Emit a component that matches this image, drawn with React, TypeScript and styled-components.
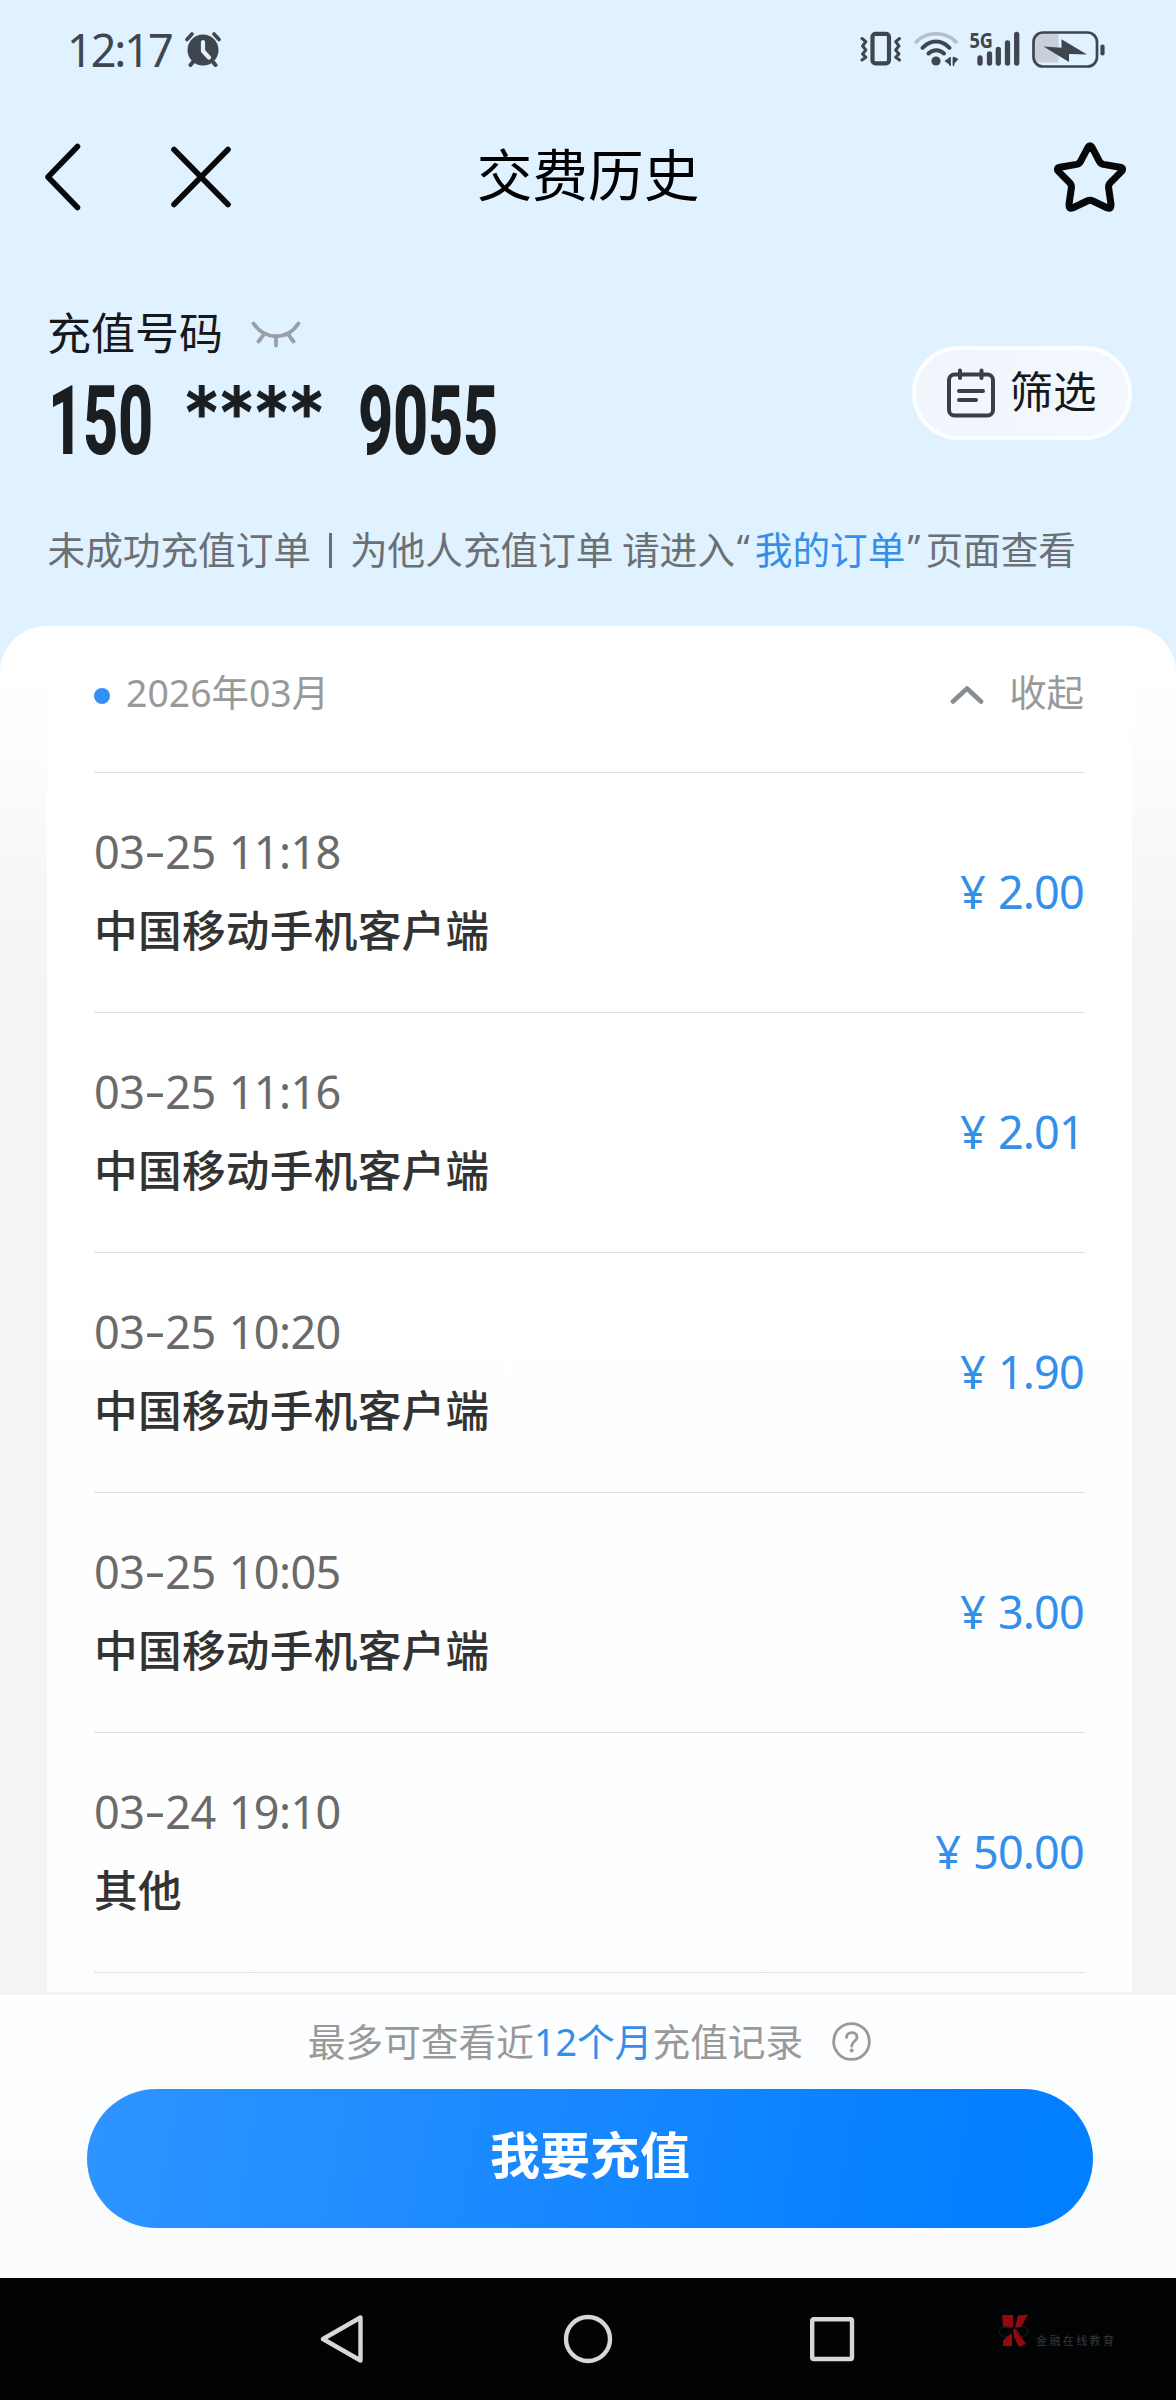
import React from "react";
import styled, { createGlobalStyle } from "styled-components";

const CJK = `"Noto Sans CJK SC", sans-serif`;
const MIXED = `"Noto Sans", "Noto Sans CJK SC", sans-serif`;

const Global = createGlobalStyle`
  html, body { margin: 0; padding: 0; background: #000; }
  *, *::before, *::after { box-sizing: border-box; }
  button { border: 0; padding: 0; margin: 0; background: none; font: inherit; color: inherit; }
  svg { display: block; flex: none; }
`;

const Screen = styled.div`
  width: 1176px;
  height: 2400px;
  display: flex;
  flex-direction: column;
  overflow: hidden;
  background: #e0f1ff;
  font-family: ${CJK};
  white-space: nowrap;
`;

const StatusBar = styled.div`
  height: 98px;
  padding: 0 70px 0 67px;
  display: flex;
  align-items: center;
  color: #40464d;
`;

const Clock = styled.span`
  font: 400 45px/60px ${MIXED};
  letter-spacing: -2.1px;
  width: 118px;
  padding-top: 2px;
`;

const StatusIcons = styled.div`
  margin-left: auto;
  display: flex;
  align-items: center;
`;

const TitleBar = styled.header`
  height: 156px;
  display: grid;
  grid-template-columns: 1fr auto 1fr;
  align-items: center;
  padding: 2px 49px 0 43px;
`;

const NavGroup = styled.div<{ $end?: boolean }>`
  display: flex;
  align-items: center;
  gap: 87px;
  justify-content: ${(p) => (p.$end ? "flex-end" : "flex-start")};
`;

const Title = styled.h1`
  margin: 0;
  font: 400 55.7px/70px ${CJK};
  color: #000;
  padding: 0 0 10px 6px;
`;

const Account = styled.section`
  height: 246px;
  padding: 47px 44px 0 47px;
  display: flex;
  justify-content: space-between;
`;

const LabelRow = styled.div`
  display: flex;
  align-items: center;
  gap: 27px;
  font: 400 44px/60px ${CJK};
  color: #16191c;
  svg { margin-top: 6px; }
`;

const PhoneNumber = styled.div`
  display: flex;
  align-items: flex-start;
  height: 100px;
  gap: 33px;
  padding: 10px 0 0 1px;
  color: #1b1e20;
`;

const Digits = styled.span<{ $count: number }>`
  width: ${(p) => p.$count * 35}px;
  font: 800 97px/100px Roboto, sans-serif;
  transform: scaleX(0.63);
  transform-origin: 0 50%;
  letter-spacing: -0.4px;
`;

const Stars = styled.span`
  width: 139px;
  margin-top: -8px;
  font: 700 68px/100px "DejaVu Sans", sans-serif;
  letter-spacing: 4.2px;
  transform: scaleX(0.88);
  transform-origin: 0 50%;
  -webkit-text-stroke: 1px #1b1e20;
`;

const FilterButton = styled.button`
  width: 220px;
  height: 94px;
  margin-top: 45px;
  display: flex;
  align-items: center;
  justify-content: center;
  gap: 14px;
  border: 4px solid #fdfeff;
  border-radius: 47px;
  background: linear-gradient(90deg, #f1f6fc, #f3f8fe);
  font: 400 43.5px/60px ${CJK};
  color: #16191c;
`;

const FilterLabel = styled.span`
  padding: 0 2px 6px 0;
`;

const Hint = styled.p`
  margin: 0;
  height: 126px;
  padding: 20px 0 0 47.5px;
  display: flex;
  font: 400 37.65px/56px ${CJK};
  color: #6b7075;
`;

const Link = styled.span`
  color: #338fea;
`;

const Bar = styled.i`
  width: 3px;
  height: 35px;
  margin: 13px 18px 0;
  background: #6b7075;
`;

const Quote = styled.span`
  width: 20px;
  padding-left: 2px;
  font-family: "Noto Sans", sans-serif;
  font-size: 36px;
`;

const Sheet = styled.main`
  height: 1369px;
  border-radius: 47px 47px 0 0;
  padding: 0 44px 3px 47px;
  background: linear-gradient(#fff 0, #fefefe 100px, #f7f7f7 250px, #f4f4f4 380px, #f3f4f4);
`;

const Card = styled.div`
  height: 100%;
  padding: 0 47px;
  background: linear-gradient(#fff, #fefefe 1250px, #fcfdfe);
`;

const MonthRow = styled.div`
  height: 147px;
  display: flex;
  align-items: flex-start;
  padding-top: 38px;
  border-bottom: 1px solid #e0e1e2;
  font: 400 37.4px/58px ${MIXED};
  color: #999;
`;

const Dot = styled.i`
  width: 16px;
  height: 16px;
  margin: 24px 16px 0 0;
  border-radius: 50%;
  background: #318ff5;
`;

const Toggle = styled.button`
  margin-left: auto;
  display: flex;
  align-items: center;
  gap: 25px;
  padding-right: 1px;
  svg { margin-top: 4px; }
`;

const Row = styled.div`
  height: 240px;
  display: flex;
  align-items: center;
  justify-content: space-between;
  border-bottom: 1px solid #e0e1e2;
`;

const Time = styled.div`
  font: 400 45px/60px ${MIXED};
  color: #6a6a6a;
  letter-spacing: -0.6px;
  word-spacing: 2px;
`;

const Dash = styled.span`
  display: inline-block;
  width: 21px;
  text-align: center;
  transform: translateY(-2px) scaleX(1.45);
`;

const Source = styled.div`
  margin: 14px 0 3px;
  font: 500 43.7px/64px ${CJK};
  letter-spacing: 0.25px;
  color: #333;
`;

const Amount = styled.div`
  margin-bottom: 2px;
  font: 400 45px/60px ${MIXED};
  color: #338fea;
  letter-spacing: -0.8px;
  word-spacing: 2px;
  padding-right: 1px;
`;

const Footer = styled.footer`
  height: 283px;
  padding: 18px 84px 0 87px;
  background: linear-gradient(#fdfeff, #fafbfd);
`;

const Note = styled.div`
  height: 76px;
  display: flex;
  justify-content: center;
  align-items: flex-start;
  font: 400 37.7px/57px ${MIXED};
  color: #999;
  svg { margin: 9px 0 0 29px; }
`;

const PayButton = styled.button`
  width: 1006px;
  height: 139px;
  border-radius: 70px;
  background: linear-gradient(100deg, #2e94ff, #1888ff 48%, #0680ff 82%, #007fff);
  color: #fff;
  font: 700 50px/70px ${CJK};
  padding-bottom: 13px;
`;

const SystemNav = styled.nav`
  height: 122px;
  padding: 0 63px 0 320px;
  display: flex;
  align-items: center;
  background: #020304;
`;

const Watermark = styled.div`
  margin-left: auto;
  display: flex;
  align-items: flex-end;
  gap: 7px;
  width: 114px;
  margin-top: -18px;
  font: 400 11px/13px ${CJK};
  letter-spacing: 2.4px;
  color: #3a3a3c;
`;

const AlarmIcon = () => (
  <svg width="36" height="36" viewBox="0 0 36 36" fill="none" stroke="#40464d" strokeLinecap="round">
    <circle cx="18" cy="19" r="15.5" fill="#40464d" stroke="none" />
    <path d="M2 8.5 7 3M34 8.5 29 3" strokeWidth="3.6" />
    <path d="M8 31 5.5 34M28 31l2.500 3" strokeWidth="4" />
    <path d="M18 11v9l6 6.500" stroke="#e0f1ff" strokeWidth="4.2" strokeLinejoin="round" />
  </svg>
);

const SignalIcons = () => (
  <svg width="246" height="60" viewBox="0 -10 246 60" fill="none" stroke="#40464d" strokeLinecap="round" strokeLinejoin="round">
    <rect x="12.500" y="4.800" width="16.500" height="29.500" rx="3" strokeWidth="4.200" />
    <path d="M2 9.500l3.800 3.200L2.600 17l3.200 4-3.200 4 3.200 3.200L2 31M39.500 9.500l-3.800 3.200 3.200 4.300-3.200 4 3.200 4-3.200 3.200 3.800 2.800" strokeWidth="3" />
    <path d="M56.200 13c10-11 29.500-11 39.800 0" stroke="#b3bfcc" strokeWidth="3.500" />
    <path d="M62.500 18.800c8-8.300 19-8.300 27 0M68.500 24.500c4.500-4.500 11-4.500 15.500 0" strokeWidth="4" />
    <circle cx="76" cy="32" r="4.600" fill="#40464d" stroke="none" />
    <path d="M84.500 32l5.500-4v8zM98.500 30l-5 -2.500v8z" fill="#40464d" stroke="none" />
    <path d="M90 29v7M93.500 29v7" strokeWidth="1.800" />
    <text x="109.500" y="19" fill="#40464d" stroke="none" fontFamily="Noto Sans, sans-serif" fontWeight="700" fontSize="22" textLength="23.500" lengthAdjust="spacingAndGlyphs">5G</text>
    <path d="M120 29v5M129.500 25v9M138.300 20.500v13.500M147.500 14v20M156.700 5.500v28.500" strokeWidth="5.300" />
    <path d="M182 4.500h-2c-4 0-7 3-7 7v15c0 4 3 7 7 7h18.500v-29z" fill="#c7d0dc" stroke="none" />
    <rect x="173.500" y="3.500" width="63.500" height="34" rx="9.500" strokeWidth="2.700" />
    <path d="M183.500 17.500l18 1.200v-8.500L227 25.500l-18-.6v8z" fill="#40464d" stroke="none" />
    <path d="M242.500 17.500v7" strokeWidth="4.200" />
  </svg>
);

const BackIcon = () => (
  <svg width="38" height="68" viewBox="0 0 38 68" fill="none" stroke="#06080a" strokeWidth="5.6" strokeLinecap="round" strokeLinejoin="round">
    <path d="M34.500 3.500 5 34l29.500 30.500" />
  </svg>
);

const CloseIcon = () => (
  <svg width="66" height="66" viewBox="0 0 66 66" fill="none" stroke="#06080a" strokeWidth="5.6" strokeLinecap="round">
    <path d="M6 5.500 60 60.500M60 5.500 6 60.500" />
  </svg>
);

const StarIcon = () => (
  <svg width="74" height="72" viewBox="0 0 74 72" fill="none" stroke="#06080a" strokeWidth="7" strokeLinejoin="round">
    <path d="M35 6.300Q37 3.400 39 6.300L46.500 20.500Q47.800 22.800 50.500 23.400L67 26.200Q71.200 27 68.600 30.400L57.500 41.500Q55.300 43.600 55.600 46.800L58 63.300Q58.300 68.300 54.500 67L39.800 60Q37 58.600 34.200 60L19.500 67Q15.700 68.300 16 63.300L18.400 46.800Q18.700 43.600 16.500 41.500L5.400 30.400Q2.800 27 7 26.200L23.500 23.400Q26.200 22.800 27.500 20.500Z" />
  </svg>
);

const ClosedEyeIcon = () => (
  <svg width="52" height="28" viewBox="0 0 52 28" fill="none" stroke="#9a9fa6" strokeWidth="3.8" strokeLinecap="round">
    <path d="M3.500 3.500C15 20.500 37 20.500 48.500 3.500M13 15.500 8.500 21.500M26 17v8.500M39 15.500l4.500 6" />
  </svg>
);

const ListIcon = () => (
  <svg width="50" height="50" viewBox="0 0 50 50" fill="none" stroke="#3a3f44" strokeWidth="4" strokeLinecap="round">
    <rect x="3" y="6.500" width="44" height="41" rx="5.500" />
    <path d="M14 2.500v7.500M35.500 2.500v7.500M13 23h24M13 32h17" />
  </svg>
);

const ChevronUpIcon = () => (
  <svg width="34" height="20" viewBox="0 0 34 20" fill="none" stroke="#888c93" strokeWidth="4.600" strokeLinecap="round" strokeLinejoin="round">
    <path d="M3 16.500 17 3.500 31 16.500" />
  </svg>
);

const HelpIcon = () => (
  <svg width="39" height="39" viewBox="0 0 39 39" fill="none" stroke="#999" strokeWidth="2.800" strokeLinecap="round">
    <circle cx="19.500" cy="19.500" r="17.900" />
    <path d="M14.500 15.500c0-6.500 10.500-6.500 10.500-.3 0 4-5.300 4.300-5.300 9" />
    <circle cx="19.700" cy="28.500" r="1.900" fill="#999" stroke="none" />
  </svg>
);

const SystemIcons = () => (
  <svg width="536" height="52" viewBox="0 0 536 52" fill="none" stroke="#d8d8d8" strokeWidth="4.400" strokeLinejoin="round">
    <path d="M40.500 4.500v43L3 26z" />
    <circle cx="268" cy="26" r="22" />
    <rect x="492.200" y="6.200" width="39.800" height="39.800" rx="1.500" />
  </svg>
);

const LogoIcon = () => (
  <svg width="30" height="33" viewBox="0 0 30 33" fill="#94090f">
    <path d="M3 1h11v12.500H4zM19 1.500l10-1-7 13h-6zM4 27l4-4.500 5-3v12.500H4zM14 15.500l3-1 10 15.500-7 3-5-10z" />
    <path d="M12 18.500a6 5 0 1 1-2-5M18 17.500a5.500 5 0 1 0 3-4.500" fill="none" stroke="#1c1d1f" />
  </svg>
);

const records = [
  { date: ["03", "25"], time: "11:18", source: "中国移动手机客户端", amount: "2.00" },
  { date: ["03", "25"], time: "11:16", source: "中国移动手机客户端", amount: "2.01" },
  { date: ["03", "25"], time: "10:20", source: "中国移动手机客户端", amount: "1.90" },
  { date: ["03", "25"], time: "10:05", source: "中国移动手机客户端", amount: "3.00" },
  { date: ["03", "24"], time: "19:10", source: "其他", amount: "50.00" },
];

export default function App() {
  return (
    <>
      <Global />
      <Screen>
        <StatusBar>
          <Clock>12:17</Clock>
          <AlarmIcon />
          <StatusIcons>
            <SignalIcons />
          </StatusIcons>
        </StatusBar>
        <TitleBar>
          <NavGroup>
            <BackIcon />
            <CloseIcon />
          </NavGroup>
          <Title>交费历史</Title>
          <NavGroup $end>
            <StarIcon />
          </NavGroup>
        </TitleBar>
        <Account>
          <div>
            <LabelRow>
              充值号码
              <ClosedEyeIcon />
            </LabelRow>
            <PhoneNumber>
              <Digits $count={3}>150</Digits>
              <Stars>****</Stars>
              <Digits $count={4}>9055</Digits>
            </PhoneNumber>
          </div>
          <FilterButton>
            <ListIcon />
            <FilterLabel>筛选</FilterLabel>
          </FilterButton>
        </Account>
        <Hint>
          未成功充值订单
          <Bar />
          为他人充值订单&nbsp;请进入
          <Quote>“</Quote>
          <Link>我的订单</Link>
          <Quote>”</Quote>
          页面查看
        </Hint>
        <Sheet>
          <Card>
            <MonthRow>
              <Dot />
              2026年03月
              <Toggle>
                <ChevronUpIcon />
                收起
              </Toggle>
            </MonthRow>
            {records.map((r) => (
              <Row key={r.time}>
                <div>
                  <Time>
                    {r.date[0]}
                    <Dash>-</Dash>
                    {r.date[1]} {r.time}
                  </Time>
                  <Source>{r.source}</Source>
                </div>
                <Amount>¥ {r.amount}</Amount>
              </Row>
            ))}
          </Card>
        </Sheet>
        <Footer>
          <Note>
            最多可查看近<Link>12个月</Link>充值记录
            <HelpIcon />
          </Note>
          <PayButton>我要充值</PayButton>
        </Footer>
        <SystemNav>
          <SystemIcons />
          <Watermark>
            <LogoIcon />
            金融在线教育
          </Watermark>
        </SystemNav>
      </Screen>
    </>
  );
}
